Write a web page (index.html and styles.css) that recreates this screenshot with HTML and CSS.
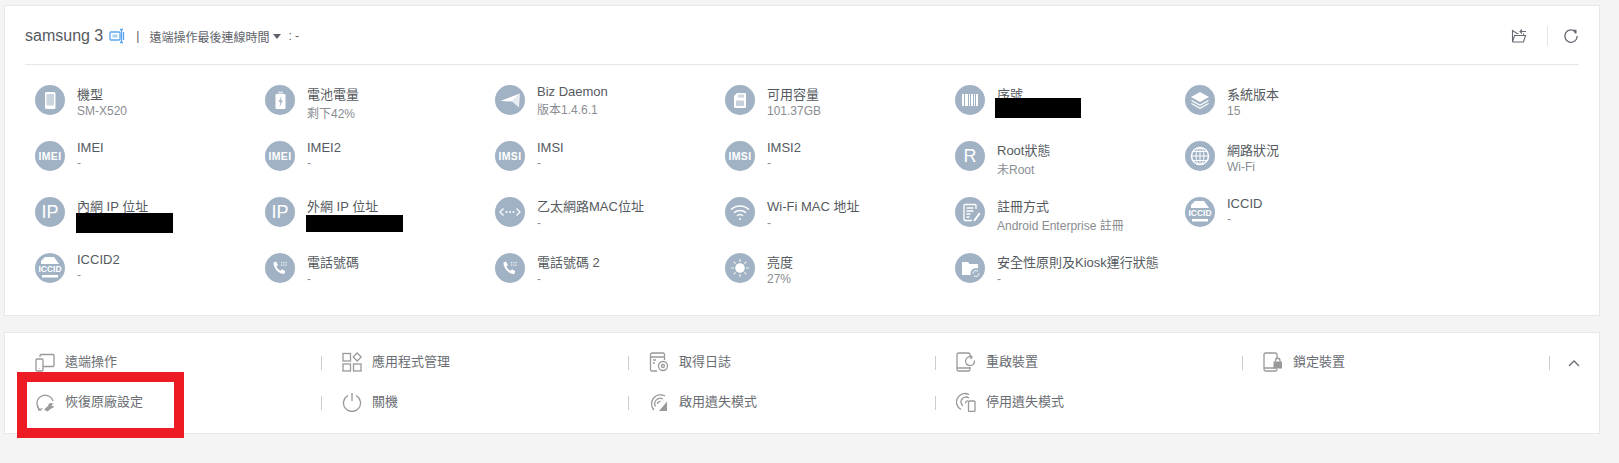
FILE: index.html
```html
<!DOCTYPE html>
<html lang="zh-Hant">
<head>
<meta charset="utf-8">
<title>samsung 3</title>
<link rel="stylesheet" href="styles.css">
</head>
<body>
<section class="panel info">
  <header class="head">
    <div class="head-left">
      <span class="name">samsung 3</span>
      <svg class="device-ic" width="16" height="16" viewBox="0 0 16 16" fill="none" stroke="#5aa5ee" stroke-width="1.3"><rect x="1" y="4" width="10" height="8" rx="1"/><rect x="3.5" y="6.5" width="5" height="3" fill="#a9cff5" stroke="none"/><path d="M11 1.5h1.5v13H11M14.5 4v8M12.5 1.5h1.5M12.5 14.5h1.5"/></svg>
      <span class="pipe">|</span>
      <span class="conn">遠端操作最後連線時間</span>
      <span class="caret"></span>
      <span class="conn conn-val">: -</span>
    </div>
    <div class="head-right">
      <svg width="16" height="16" viewBox="0 0 16 16" fill="none" stroke="#666a72" stroke-width="1.1"><path d="M1.5 14V2.5L6 5.5h1.5M1.5 14h11l2-6.5H3.5L1.500 14M12.500 7.500V5.500M9 3.500h6M11 1.500L9 3.500l2 2"/></svg>
      <span class="head-sep"></span>
      <svg width="16" height="16" viewBox="0 0 16 16" fill="none" stroke="#666a72" stroke-width="1.3"><path d="M12.800 4.200A6.200 6.200 0 1 0 14.200 8"/><path d="M9.500 1.700h4v3.800h-1.500" fill="#666a72" stroke="none"/></svg>
    </div>
  </header>

  <div class="grid">
    <div class="item">
      <span class="ic"><svg viewBox="0 0 30 30"><rect x="10" y="7" width="10.500" height="17" rx="1.500" fill="#fff"/><rect x="11.500" y="9" width="7.500" height="11.500" fill="#a0b2c4" opacity=".55"/></svg></span>
      <div class="txt"><div class="t">機型</div><div class="s">SM-X520</div></div>
    </div>
    <div class="item">
      <span class="ic"><svg viewBox="0 0 30 30"><rect x="13" y="6.500" width="5" height="2" fill="#fff" opacity=".6"/><rect x="10.500" y="9" width="10" height="15" rx="1" fill="#fff"/><path d="M16.500 11l-3 6h2l-1 5 3.300-6.500h-2z" fill="#a0b2c4"/></svg></span>
      <div class="txt"><div class="t">電池電量</div><div class="s s-cjk">剩下42%</div></div>
    </div>
    <div class="item">
      <span class="ic"><svg viewBox="0 0 30 30"><path d="M25 8.500L5.500 16l11.500.500z" fill="#fff"/><path d="M25 8.500L17 16.500l7 6z" fill="#fff" opacity=".75"/></svg></span>
      <div class="txt"><div class="t t-lat">Biz Daemon</div><div class="s s-cjk">版本1.4.6.1</div></div>
    </div>
    <div class="item">
      <span class="ic"><svg viewBox="0 0 30 30"><path d="M12 8h8a1 1 0 0 1 1 1v13a1 1 0 0 1-1 1H10a1 1 0 0 1-1-1V11z" fill="#fff"/><rect x="11" y="15.500" width="8" height="5.500" fill="#a0b2c4" opacity=".6"/><path d="M14 9.500v3M16 9.500v3M18 9.500v3" stroke="#a0b2c4" stroke-width="1"/></svg></span>
      <div class="txt"><div class="t">可用容量</div><div class="s">101.37GB</div></div>
    </div>
    <div class="item">
      <span class="ic"><svg viewBox="0 0 30 30" fill="#fff"><rect x="7" y="9" width="2" height="12"/><rect x="10" y="9" width="3" height="12"/><rect x="14" y="9" width="1" height="12"/><rect x="16" y="9" width="2" height="12"/><rect x="19" y="9" width="1" height="12"/><rect x="21" y="9" width="2" height="12"/></svg></span>
      <div class="txt"><div class="t">序號</div><div class="s"></div><span class="redact redact-serial"></span></div>
    </div>
    <div class="item">
      <span class="ic"><svg viewBox="0 0 30 30"><path d="M15 7l9 5-9 5-9-5z" fill="#fff"/><path d="M6.500 15.500l8.500 4.700 8.500-4.700M6.500 18.500l8.500 4.700 8.500-4.700" fill="none" stroke="#fff" stroke-width="1.200"/></svg></span>
      <div class="txt"><div class="t">系統版本</div><div class="s">15</div></div>
    </div>

    <div class="item">
      <span class="ic ic-word">IMEI</span>
      <div class="txt"><div class="t t-lat">IMEI</div><div class="s">-</div></div>
    </div>
    <div class="item">
      <span class="ic ic-word">IMEI</span>
      <div class="txt"><div class="t t-lat">IMEI2</div><div class="s">-</div></div>
    </div>
    <div class="item">
      <span class="ic ic-word">IMSI</span>
      <div class="txt"><div class="t t-lat">IMSI</div><div class="s">-</div></div>
    </div>
    <div class="item">
      <span class="ic ic-word">IMSI</span>
      <div class="txt"><div class="t t-lat">IMSI2</div><div class="s">-</div></div>
    </div>
    <div class="item">
      <span class="ic ic-big">R</span>
      <div class="txt"><div class="t">Root狀態</div><div class="s s-cjk">未Root</div></div>
    </div>
    <div class="item">
      <span class="ic"><svg viewBox="0 0 30 30" fill="none" stroke="#fff" stroke-width="1"><circle cx="15" cy="15" r="8.500" stroke-width="1.500"/><ellipse cx="15" cy="15" rx="4" ry="8.500"/><path d="M15 6.500v17M6.500 15h17M8 10.500h14M8 19.500h14"/></svg></span>
      <div class="txt"><div class="t">網路狀況</div><div class="s">Wi-Fi</div></div>
    </div>

    <div class="item">
      <span class="ic ic-big">IP</span>
      <div class="txt"><div class="t">內網 IP 位址</div><div class="s"></div><span class="redact redact-lan"></span></div>
    </div>
    <div class="item">
      <span class="ic ic-big">IP</span>
      <div class="txt"><div class="t">外網 IP 位址</div><div class="s"></div><span class="redact redact-wan"></span></div>
    </div>
    <div class="item">
      <span class="ic"><svg viewBox="0 0 30 30"><path d="M8.500 11.500L5 15l3.500 3.500M21.500 11.500L25 15l-3.500 3.500" fill="none" stroke="#fff" stroke-width="1.300"/><circle cx="11.500" cy="15" r="1" fill="#fff"/><circle cx="15" cy="15" r="1" fill="#fff"/><circle cx="18.500" cy="15" r="1" fill="#fff"/></svg></span>
      <div class="txt"><div class="t">乙太網路MAC位址</div><div class="s">-</div></div>
    </div>
    <div class="item">
      <span class="ic"><svg viewBox="0 0 30 30" fill="none" stroke="#fff" stroke-width="1.500"><path d="M6 12.500a13 13 0 0 1 18 0M9 15.800a9 9 0 0 1 12 0M12 18.800a4.500 4.500 0 0 1 6 0"/><circle cx="15" cy="22" r="1" fill="#fff" stroke="none"/></svg></span>
      <div class="txt"><div class="t">Wi-Fi MAC 地址</div><div class="s">-</div></div>
    </div>
    <div class="item">
      <span class="ic"><svg viewBox="0 0 30 30" fill="none" stroke="#fff" stroke-width="1.300"><path d="M21 12V8.500a1 1 0 0 0-1-1H10a1 1 0 0 0-1 1v14a1 1 0 0 0 1 1h7"/><path d="M11.500 11h7M11.500 14h7M11.500 17h4M11.500 20h3"/><path d="M19 22.500l5-7 1.500 1.200-5 7-2 .800z" fill="#fff" stroke="none"/></svg></span>
      <div class="txt"><div class="t">註冊方式</div><div class="s s-cjk">Android Enterprise 註冊</div></div>
    </div>
    <div class="item">
      <span class="ic"><svg viewBox="0 0 30 30"><path d="M10 4h9l5 7H6V8z" fill="#fff"/><text class="sim-text" x="15" y="19.300" text-anchor="middle">ICCID</text><rect x="7" y="22" width="16" height="2.500" fill="#fff"/></svg></span>
      <div class="txt"><div class="t t-lat">ICCID</div><div class="s">-</div></div>
    </div>

    <div class="item">
      <span class="ic"><svg viewBox="0 0 30 30"><path d="M10 4h9l5 7H6V8z" fill="#fff"/><text class="sim-text" x="15" y="19.300" text-anchor="middle">ICCID</text><rect x="7" y="22" width="16" height="2.500" fill="#fff"/></svg></span>
      <div class="txt"><div class="t t-lat">ICCID2</div><div class="s">-</div></div>
    </div>
    <div class="item">
      <span class="ic"><svg viewBox="0 0 30 30"><path d="M8.500 9.500l2.500-1 2 3.500-1.500 1.500c.8 2 2 3.300 4 4.200l1.500-1.500 3.300 2-1 2.800c-5.500 0-11-5.500-10.800-11.500z" fill="#fff"/><path d="M16 9h1.200v1.200H16zM18.200 9h1.200v1.200h-1.200zM20.400 9h1.200v1.200h-1.200zM16 11.500h1.200v1.200H16zM18.200 11.500h1.200v1.200h-1.200zM20.400 11.500h1.200v1.200h-1.200z" fill="#fff" opacity=".85"/></svg></span>
      <div class="txt"><div class="t">電話號碼</div><div class="s">-</div></div>
    </div>
    <div class="item">
      <span class="ic"><svg viewBox="0 0 30 30"><path d="M8.500 9.500l2.500-1 2 3.500-1.500 1.500c.8 2 2 3.300 4 4.200l1.500-1.500 3.300 2-1 2.800c-5.500 0-11-5.500-10.800-11.500z" fill="#fff"/><path d="M16 9h1.200v1.200H16zM18.200 9h1.200v1.200h-1.200zM20.400 9h1.200v1.200h-1.200zM16 11.500h1.200v1.200H16zM18.200 11.500h1.200v1.200h-1.200zM20.400 11.500h1.200v1.200h-1.200z" fill="#fff" opacity=".85"/></svg></span>
      <div class="txt"><div class="t">電話號碼 2</div><div class="s">-</div></div>
    </div>
    <div class="item">
      <span class="ic"><svg viewBox="0 0 30 30" fill="#fff"><circle cx="15" cy="15" r="4.800"/><path d="M15 6v3M15 21v3M6 15h3M21 15h3M8.600 8.600l2 2M19.400 19.400l2 2M8.600 21.400l2-2M19.400 10.600l2-2" stroke="#fff" stroke-width="1.200" opacity=".85"/></svg></span>
      <div class="txt"><div class="t">亮度</div><div class="s">27%</div></div>
    </div>
    <div class="item">
      <span class="ic"><svg viewBox="0 0 30 30"><path d="M7 9h6l1.500 2H23v11H7z" fill="#fff"/><circle cx="21" cy="20.500" r="5.500" fill="#a0b2c4"/><path d="M18 20.500a3 3 0 0 1 5-2.200M24 20.500a3 3 0 0 1-5 2.200" fill="none" stroke="#fff" stroke-width="1"/></svg></span>
      <div class="txt"><div class="t">安全性原則及Kiosk運行狀態</div><div class="s">-</div></div>
    </div>
  </div>
</section>

<section class="panel actions">
  <div class="act-grid">
    <div class="act">
      <svg class="act-ic" viewBox="0 0 20 20"><path d="M5 5V3.500A1 1 0 0 1 6 2.500h12a1 1 0 0 1 1 1v10a1 1 0 0 1-1 1H8"/><rect x="1" y="7" width="7" height="12" rx="1"/><path d="M4.500 16.500v.5"/></svg>
      <span class="act-label">遠端操作</span>
    </div>
    <div class="act">
      <svg class="act-ic" viewBox="0 0 20 20"><rect x="1" y="1.500" width="7.500" height="7.500"/><rect x="1" y="12" width="7.500" height="7"/><rect x="11.500" y="12" width="7.500" height="7"/><path d="M15.200 1l4 4-4 4-4-4z"/></svg>
      <span class="act-label">應用程式管理</span>
    </div>
    <div class="act">
      <svg class="act-ic" viewBox="0 0 20 20"><path d="M8 19H3a1.500 1.500 0 0 1-1.500-1.500v-15A1.500 1.500 0 0 1 3 1h11a1.500 1.500 0 0 1 1.500 1.500V8"/><path d="M1.500 5h14M4 8h3M4 11h2"/><circle cx="14" cy="14" r="4.500"/><circle cx="14" cy="14" r="1.500"/></svg>
      <span class="act-label">取得日誌</span>
    </div>
    <div class="act">
      <svg class="act-ic" viewBox="0 0 20 20"><path d="M14 5V2.500A1.500 1.500 0 0 0 12.500 1H2.500A1.500 1.500 0 0 0 1 2.500v15A1.500 1.500 0 0 0 2.500 19H12.500A1.500 1.500 0 0 0 14 17.500V15M1 16h13"/><path d="M18.500 8.500a4.500 4.500 0 1 1-3-3.600M14 3.500l2 1.500-1.500 2"/></svg>
      <span class="act-label">重啟裝置</span>
    </div>
    <div class="act">
      <svg class="act-ic" viewBox="0 0 20 20"><path d="M14 6V2.500A1.500 1.500 0 0 0 12.500 1H2.500A1.500 1.500 0 0 0 1 2.500v15A1.500 1.500 0 0 0 2.500 19H12.500A1.500 1.500 0 0 0 14 17.500V17M1 16h13"/><rect x="10.500" y="9.500" width="8.500" height="7" fill="#999" stroke="none"/><path d="M12.500 9.500v-1a2.200 2.200 0 0 1 4.500 0v1"/></svg>
      <span class="act-label">鎖定裝置</span>
    </div>
    <div class="act act-toggle">
      <svg width="12" height="8" viewBox="0 0 12 8" fill="none" stroke="#666a72" stroke-width="1.300"><path d="M1 7l5-5 5 5"/></svg>
    </div>

    <div class="act">
      <svg class="act-ic" viewBox="0 0 20 20"><path d="M6 18.500A8.200 8.200 0 1 1 18 9"/><path d="M2.500 13.500L4 18l3.500-1.500"/><path d="M9 17.500l4-3.500 1-2.500 2.500-.500 2 1-2 1 1 1.500 1.500-1-.500 2-3 1.500-3 2.500z" fill="#999" stroke="none"/></svg>
      <span class="act-label">恢復原廠設定</span>
    </div>
    <div class="act">
      <svg class="act-ic" viewBox="0 0 20 20"><path d="M6 3.500a8.500 8.500 0 1 0 8 0M10 1v8"/></svg>
      <span class="act-label">關機</span>
    </div>
    <div class="act">
      <svg class="act-ic" viewBox="0 0 20 20"><path d="M16 4A9 9 0 0 0 5 18M14 7a5.500 5.500 0 0 0-7.500 7.500M11.500 9.500A2.500 2.500 0 0 0 8.500 12"/><path d="M18 9.500v9.500h-8z" fill="#999" stroke="none"/></svg>
      <span class="act-label">啟用遺失模式</span>
    </div>
    <div class="act act-last">
      <svg class="act-ic" viewBox="0 0 20 20"><path d="M13 2.500A8.500 8.500 0 0 0 5 17.500M13 6a5 5 0 0 0-6 8M12 9a2.200 2.200 0 0 0-2.500 2.500"/><rect x="12.500" y="9" width="6.500" height="10.500" rx="1"/></svg>
      <span class="act-label">停用遺失模式</span>
    </div>
  </div>
  <div class="highlight"></div>
</section>
</body>
</html>
```

FILE: styles.css
```css
* { box-sizing: border-box; }

html, body { margin: 0; height: 100%; }

body {
  padding: 5px 19px 0 4px;
  background: #f4f4f4;
  font-family: "Liberation Sans", "Noto Sans CJK TC", sans-serif;
  color: #555a60;
  overflow: hidden;
}

.panel {
  background: #fff;
  border: 1px solid #e8e8e8;
}

.info {
  height: 311px;
  padding: 0 20px;
  margin-bottom: 16px;
}

.head {
  display: flex;
  justify-content: space-between;
  align-items: center;
  height: 59px;
  padding-top: 2px;
  border-bottom: 1px solid #e6e6e6;
}

.head-left { display: flex; align-items: center; }

.name { font-size: 16px; color: #555a60; }

.device-ic { margin-left: 6px; }

.pipe { margin: 0 10px 0 11px; font-size: 12px; color: #555a60; }

.conn { font-size: 12px; color: #5e6268; }

.conn-val { margin-left: 7px; }

.caret {
  width: 0;
  height: 0;
  margin: 1px 0 0 4px;
  border-left: 4.5px solid transparent;
  border-right: 4.5px solid transparent;
  border-top: 5px solid #5e6268;
}

.head-right { display: flex; align-items: center; }

.head-sep {
  width: 1px;
  height: 20px;
  margin: 0 15px 0 20px;
  background: #e4e4e4;
}

.grid {
  display: grid;
  grid-template-columns: repeat(6, 230px);
  grid-auto-rows: 56px;
  padding: 20px 0 0 10px;
}

.item { display: flex; gap: 12px; align-items: flex-start; }

.ic {
  flex: none;
  display: flex;
  align-items: center;
  justify-content: center;
  width: 30px;
  height: 30px;
  border-radius: 50%;
  background: #a0b2c4;
  color: #fff;
  overflow: hidden;
}

.ic svg { width: 30px; height: 30px; display: block; }

.ic-word { font-size: 10.500px; font-weight: 700; letter-spacing: .3px; }

.ic-big { font-size: 18px; }

.sim-text {
  font-family: "Liberation Sans", sans-serif;
  font-size: 8.500px;
  font-weight: 700;
  fill: #fff;
}

.txt { position: relative; min-width: 0; white-space: nowrap; }

.t { font-size: 13px; line-height: 20px; color: #555a60; }

.t-lat { line-height: 14px; padding-bottom: 2px; }

.s { font-size: 12px; line-height: 12px; color: #8a8d91; }

.s-cjk { line-height: 18px; }

.redact { position: absolute; background: #000; }

.redact-serial { left: -2px; top: 13px; width: 86px; height: 20px; }

.redact-lan { left: -1px; top: 16px; width: 97px; height: 20px; }

.redact-wan { left: -1px; top: 18px; width: 97px; height: 17px; }

.actions {
  position: relative;
  height: 102px;
}

.act-grid {
  display: grid;
  grid-template-columns: repeat(5, 307px) 40px;
  grid-auto-rows: 14px;
  row-gap: 26px;
  padding: 23px 0 0 10px;
}

.act {
  display: flex;
  align-items: center;
  gap: 10px;
  padding-left: 20px;
  border-right: 1px solid #ccc;
  font-size: 13px;
  color: #6a6d72;
}

.act-label { margin-bottom: 5px; }

.act-last { border-right: 0; }

.act-toggle { border-right: 0; padding-left: 18px; }

.act-ic {
  flex: none;
  width: 20px;
  height: 20px;
  margin-bottom: 2px;
  fill: none;
  stroke: #999;
  stroke-width: 1.300;
}

.highlight {
  position: absolute;
  left: 12px;
  top: 39px;
  width: 167px;
  height: 66px;
  border: 10px solid #ed1c24;
}
```
